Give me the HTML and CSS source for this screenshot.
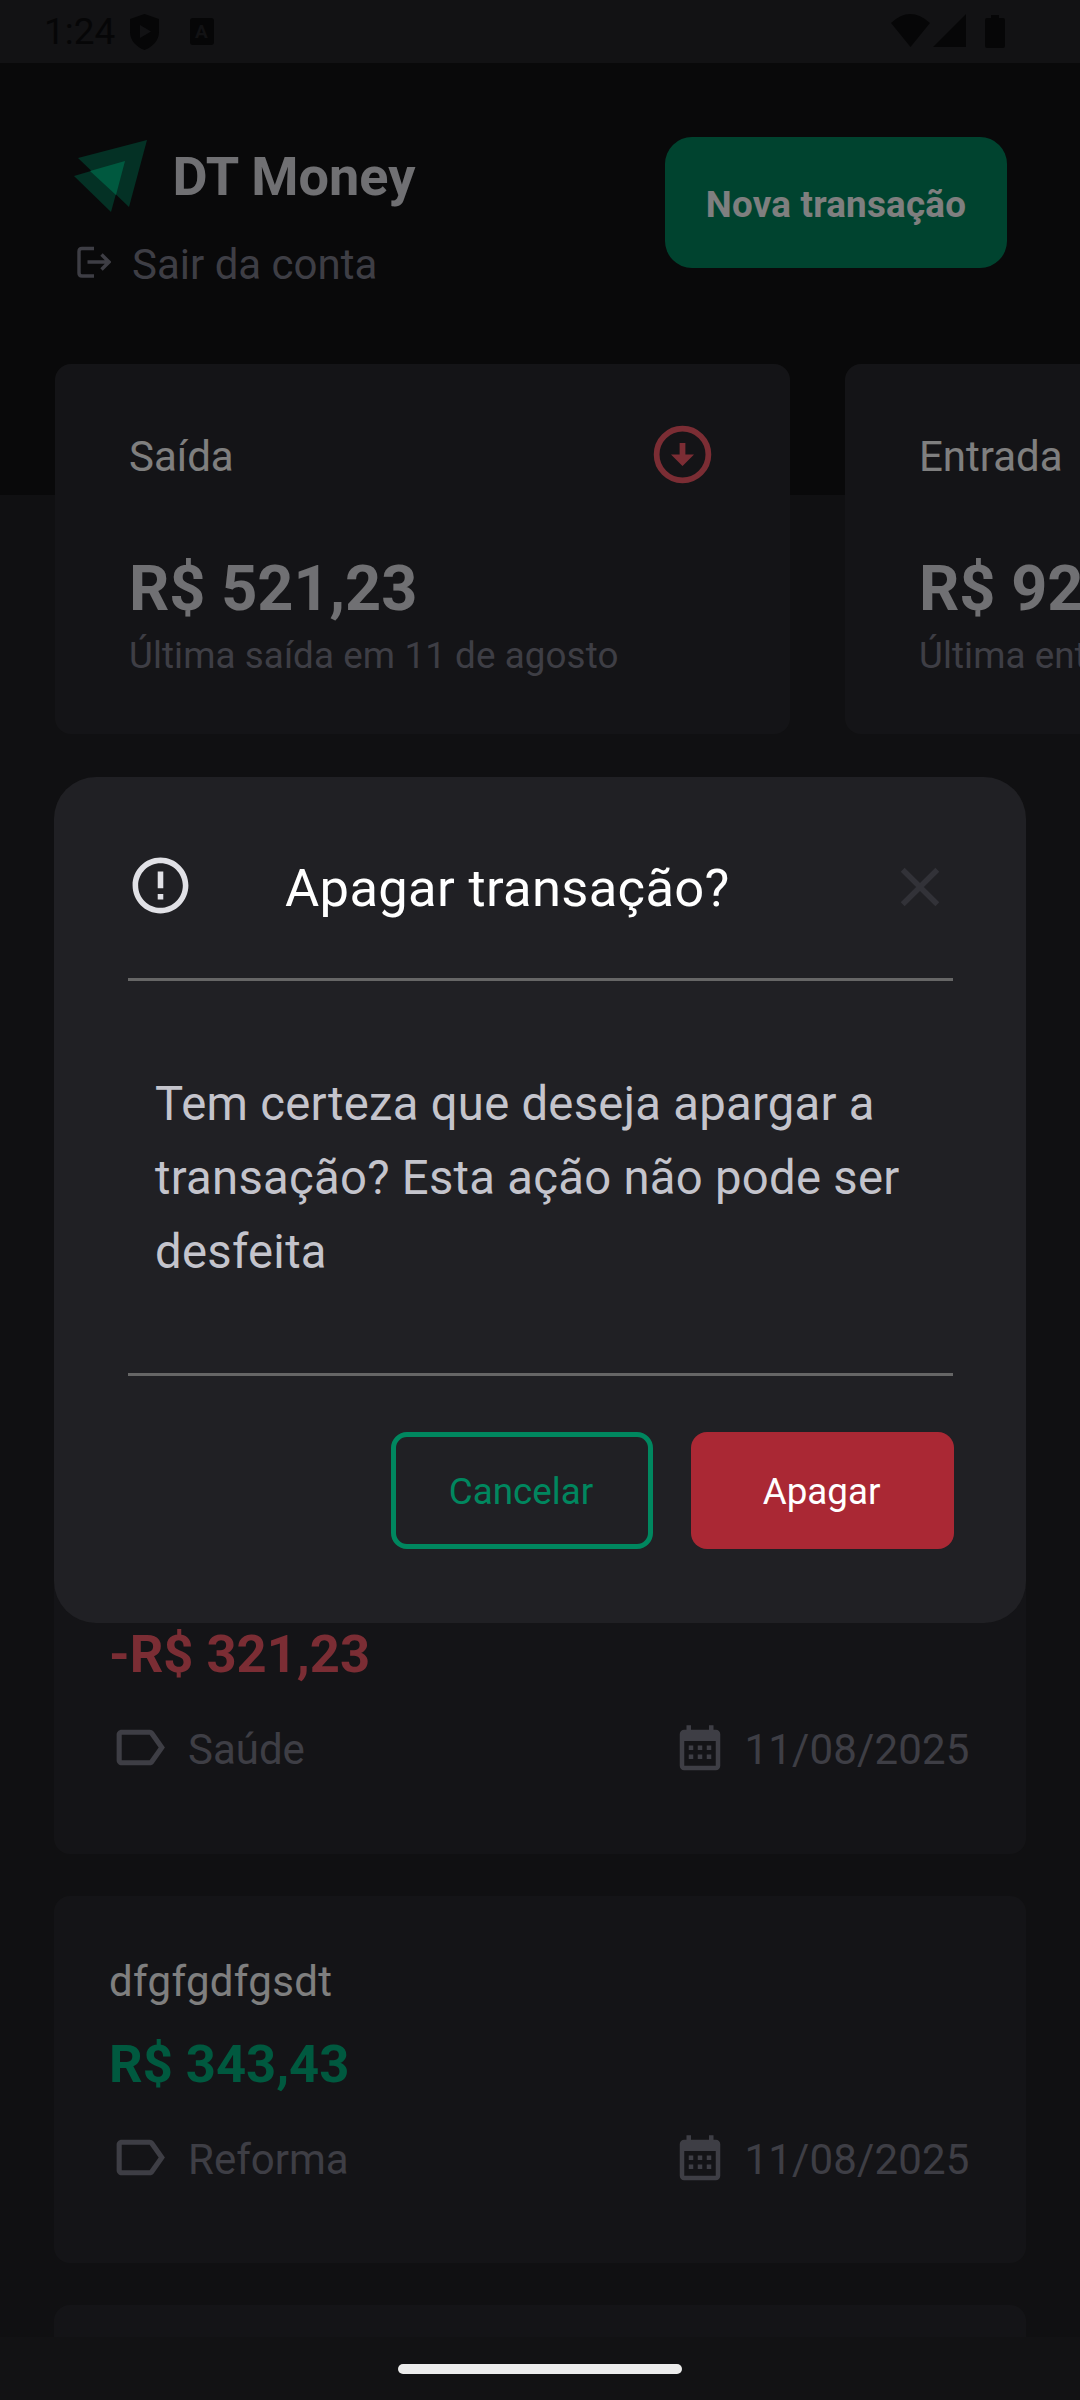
FILE: index.html
```html
<!DOCTYPE html>
<html lang="pt-BR">
<head>
<meta charset="utf-8">
<title>DT Money</title>
<link rel="stylesheet" href="styles.css">
</head>
<body>
<svg class="sprite" width="0" height="0">
  <symbol id="tag" viewBox="0 0 24 24"><path d="M17.63 5.84C17.27 5.33 16.67 5 16 5L5 5.01C3.9 5.01 3 5.9 3 7v10c0 1.1.9 1.99 2 1.99L16 19c.67 0 1.27-.33 1.63-.84L22 12l-4.37-6.16zM16 17H5V7h11l3.55 5L16 17z"/></symbol>
  <symbol id="calendar" viewBox="0 0 24 24"><path d="M9 10v2H7v-2h2m4 0v2h-2v-2h2m4 0v2h-2v-2h2m2-7a2 2 0 0 1 2 2v14a2 2 0 0 1-2 2H5c-1.11 0-2-.9-2-2V5a2 2 0 0 1 2-2h1V1h2v2h8V1h2v2h1m0 16V8H5v11h14M9 14v2H7v-2h2m4 0v2h-2v-2h2m4 0v2h-2v-2h2z"/></symbol>
</svg>
<div class="status">
  <span class="clock">1:24</span>
  <svg class="shield" viewBox="0 0 29 36"><path fill-rule="evenodd" d="M14.5 0 29 5v13c0 8-6 15-14.5 18C6 33 0 26 0 18V5zM10 11v13l11-6.500z"/></svg>
  <span class="badge">A</span>
  <svg class="system" viewBox="0 0 116 36"><path d="M0 9Q19-9 39 9L19.500 33zM42 33 75 0v33zM94 6q0-2 2-2h4V1h8v3h4q2 0 2 2v26q0 2-2 2H96q-2 0-2-2z"/></svg>
</div>
<main class="app">
  <header class="header">
    <div class="brand">
      <div class="logo">
        <svg class="mark" viewBox="0 0 75 74"><path class="faint" d="M74 1 5 19l51 49z"/><path class="faint" d="M52 22 1 37l37 36z"/><path class="bright" d="M52 22 17 32l26 24z"/></svg>
        <span class="name">DT Money</span>
      </div>
      <div class="logout">
        <svg class="exit" viewBox="0 0 34 32"><path d="M17 2.500H5Q2 2.500 2 5.500V27Q2 30 5 30H17M10.500 16H31M24.500 8.500 32 16 24.500 23.500"/></svg>
        <span>Sair da conta</span>
      </div>
    </div>
    <button class="new">Nova transação</button>
  </header>
  <section class="summary">
    <article class="total">
      <div class="top"><span>Saída</span>
        <svg class="down" viewBox="0 0 24 24"><circle cx="12" cy="12" r="9"/><path d="M11 8h2v4h3l-4 4-4-4h3z"/></svg></div>
      <strong>R$ 521,23</strong>
      <small>Última saída em 11 de agosto</small>
    </article>
    <article class="total">
      <div class="top"><span>Entrada</span></div>
      <strong>R$ 92</strong>
      <small>Última ent</small>
    </article>
  </section>
  <section class="list">
    <article class="item">
      <strong class="out">-R$ 321,23</strong>
      <div class="meta"><svg class="tag"><use href="#tag"/></svg><span>Saúde</span><svg class="cal"><use href="#calendar"/></svg><span class="date">11/08/2025</span></div>
    </article>
    <article class="item described">
      <p>dfgfgdfgsdt</p>
      <strong class="in">R$ 343,43</strong>
      <div class="meta"><svg class="tag"><use href="#tag"/></svg><span>Reforma</span><svg class="cal"><use href="#calendar"/></svg><span class="date">11/08/2025</span></div>
    </article>
    <article class="item"></article>
  </section>
  <div class="backdrop">
    <div class="modal">
      <div class="modal-head">
        <svg class="alert" viewBox="0 0 24 24"><path d="M11 15h2v2h-2zm0-8h2v6h-2zm.99-5C6.470 2 2 6.480 2 12s4.470 10 9.990 10C17.520 22 22 17.520 22 12S17.520 2 11.990 2zM12 20c-4.420 0-8-3.580-8-8s3.580-8 8-8 8 3.580 8 8-3.580 8-8 8z"/></svg>
        <h2>Apagar transação?</h2>
        <svg class="close" viewBox="0 0 24 24"><path d="M19 6.410 17.590 5 12 10.590 6.410 5 5 6.410 10.590 12 5 17.590 6.410 19 12 13.410 17.590 19 19 17.590 13.410 12z"/></svg>
      </div>
      <p class="message">Tem certeza que deseja apargar a transação? Esta ação não pode ser desfeita</p>
      <div class="actions"><button class="cancel">Cancelar</button><button class="delete">Apagar</button></div>
    </div>
  </div>
</main>
<div class="nav"><div class="pill"></div></div>
</body>
</html>
```
FILE: styles.css
```css
* { box-sizing: border-box; margin: 0; }
body { width: 1080px; height: 2400px; display: flex; flex-direction: column; overflow: hidden; background: #121214; font-family: Roboto, sans-serif; font-size: 42px; }
svg { flex: none; display: block; }
button { border: 0; font: inherit; padding: 0; }
.sprite { position: absolute; }

.status { height: 63px; flex: none; display: flex; align-items: flex-start; padding: 0 74px 0 44px; color: #060607; fill: #060607; }
.clock { width: 85.5px; font-size: 37px; line-height: 63px; }
.shield { width: 29px; height: 36px; margin-top: 14px; }
.badge { width: 24px; height: 27px; margin: 18px 0 0 31px; border-radius: 3px; background: #060607; color: #121214; font-size: 19px; font-weight: 700; line-height: 27px; text-align: center; }
.system { width: 116px; height: 36px; margin: 14px -1px 0 auto; }

.app { position: relative; flex: 1; overflow: hidden; background: #202024; }
.header { height: 432px; background: #121214; display: flex; justify-content: space-between; align-items: flex-start; padding: 74px 73px 0; }
.brand { padding-top: 2px; }
.logo { display: flex; gap: 24.5px; height: 74px; }
.mark { width: 75px; height: 74px; }
.faint { fill: #08624a; }
.bright { fill: #00b37e; }
.name { font-size: 54px; font-weight: 700; line-height: 75px; color: #e1e1e6; }
.logout { display: flex; margin-top: 26px; height: 50px; line-height: 52px; color: #7c7c8a; }
.exit { width: 34px; height: 32px; margin: 7px 21px 0 4px; fill: none; stroke: #7c7c8a; stroke-width: 3.4px; }
.new { width: 342px; height: 131px; border-radius: 27px; background: #00875f; color: #fff; font-size: 36.75px; font-weight: 700; line-height: 135px; letter-spacing: .22px; }

.summary { position: relative; display: flex; gap: 55px; margin-top: -131px; padding-left: 55px; }
.total { flex: none; width: 735px; height: 370px; border-radius: 16px; background: #29292e; padding: 56px 73px 0 74px; display: flex; flex-direction: column; white-space: nowrap; }
.top { display: flex; justify-content: space-between; height: 69px; line-height: 73px; color: #fff; }
.down { width: 69px; height: 69px; fill: #f75a68; }
.down circle { fill: none; stroke: #f75a68; stroke-width: 2; }
.total strong { margin-top: 63px; font-size: 63px; line-height: 74px; color: #e1e1e6; }
.total small { margin-top: 8px; font-size: 36.75px; line-height: 43px; letter-spacing: .1px; color: #7c7c8a; }

.list { display: flex; flex-direction: column; gap: 42px; margin-top: 753px; padding: 0 54px; }
.item { height: 367px; border-radius: 16px; background: #29292e; padding: 0 55px 76px; display: flex; flex-direction: column; justify-content: flex-end; }
.described { padding-bottom: 75px; }
.item p { line-height: 50px; margin-bottom: 26px; letter-spacing: .35px; color: #fff; }
.item strong { font-size: 52.5px; line-height: 62px; margin-bottom: 32px; }
.out { color: #f75a68; }
.in { color: #00b37e; }
.meta { display: flex; height: 61px; line-height: 65px; color: #7c7c8a; fill: #7c7c8a; }
.tag { width: 61px; height: 61px; margin-right: 18px; }
.cal { width: 54px; height: 54px; margin: 6px 18px 0 auto; }
.date { width: 226.5px; letter-spacing: .15px; }

.backdrop { position: absolute; inset: 0; z-index: 2; display: flex; align-items: center; justify-content: center; background: rgba(0, 0, 0, .5); }
.modal { width: 972px; height: 846px; border-radius: 42px; background: #202024; padding: 75px 73px 74px 74px; display: flex; flex-direction: column; }
.modal-head { height: 129px; display: flex; border-bottom: 3px solid #666; }
.alert { width: 67px; height: 67px; margin-left: -1px; fill: #e1e1e6; }
h2 { margin-left: 91px; font-size: 52.5px; font-weight: 400; line-height: 73px; letter-spacing: .33px; color: #fff; white-space: nowrap; }
.close { width: 66px; height: 66px; margin: 2px 0 0 auto; fill: #323238; }
.message { height: 395px; padding: 86px 22px 0 27px; border-bottom: 3px solid #666; font-size: 47.25px; line-height: 74px; letter-spacing: .27px; color: #c4c4cc; }
.actions { display: flex; justify-content: flex-end; gap: 38px; margin: auto -1px 0 0; }
.actions button { width: 263px; height: 117px; border-radius: 16px; font-size: 36.75px; text-indent: -2px; }
.actions .cancel { width: 262px; border: 5px solid #00875f; background: none; color: #00875f; line-height: 109px; }
.delete { background: #aa2834; color: #fff; line-height: 119px; }

.nav { height: 63px; flex: none; display: flex; justify-content: center; padding-top: 27px; }
.pill { width: 284px; height: 10px; border-radius: 5px; background: #ececec; }
```
